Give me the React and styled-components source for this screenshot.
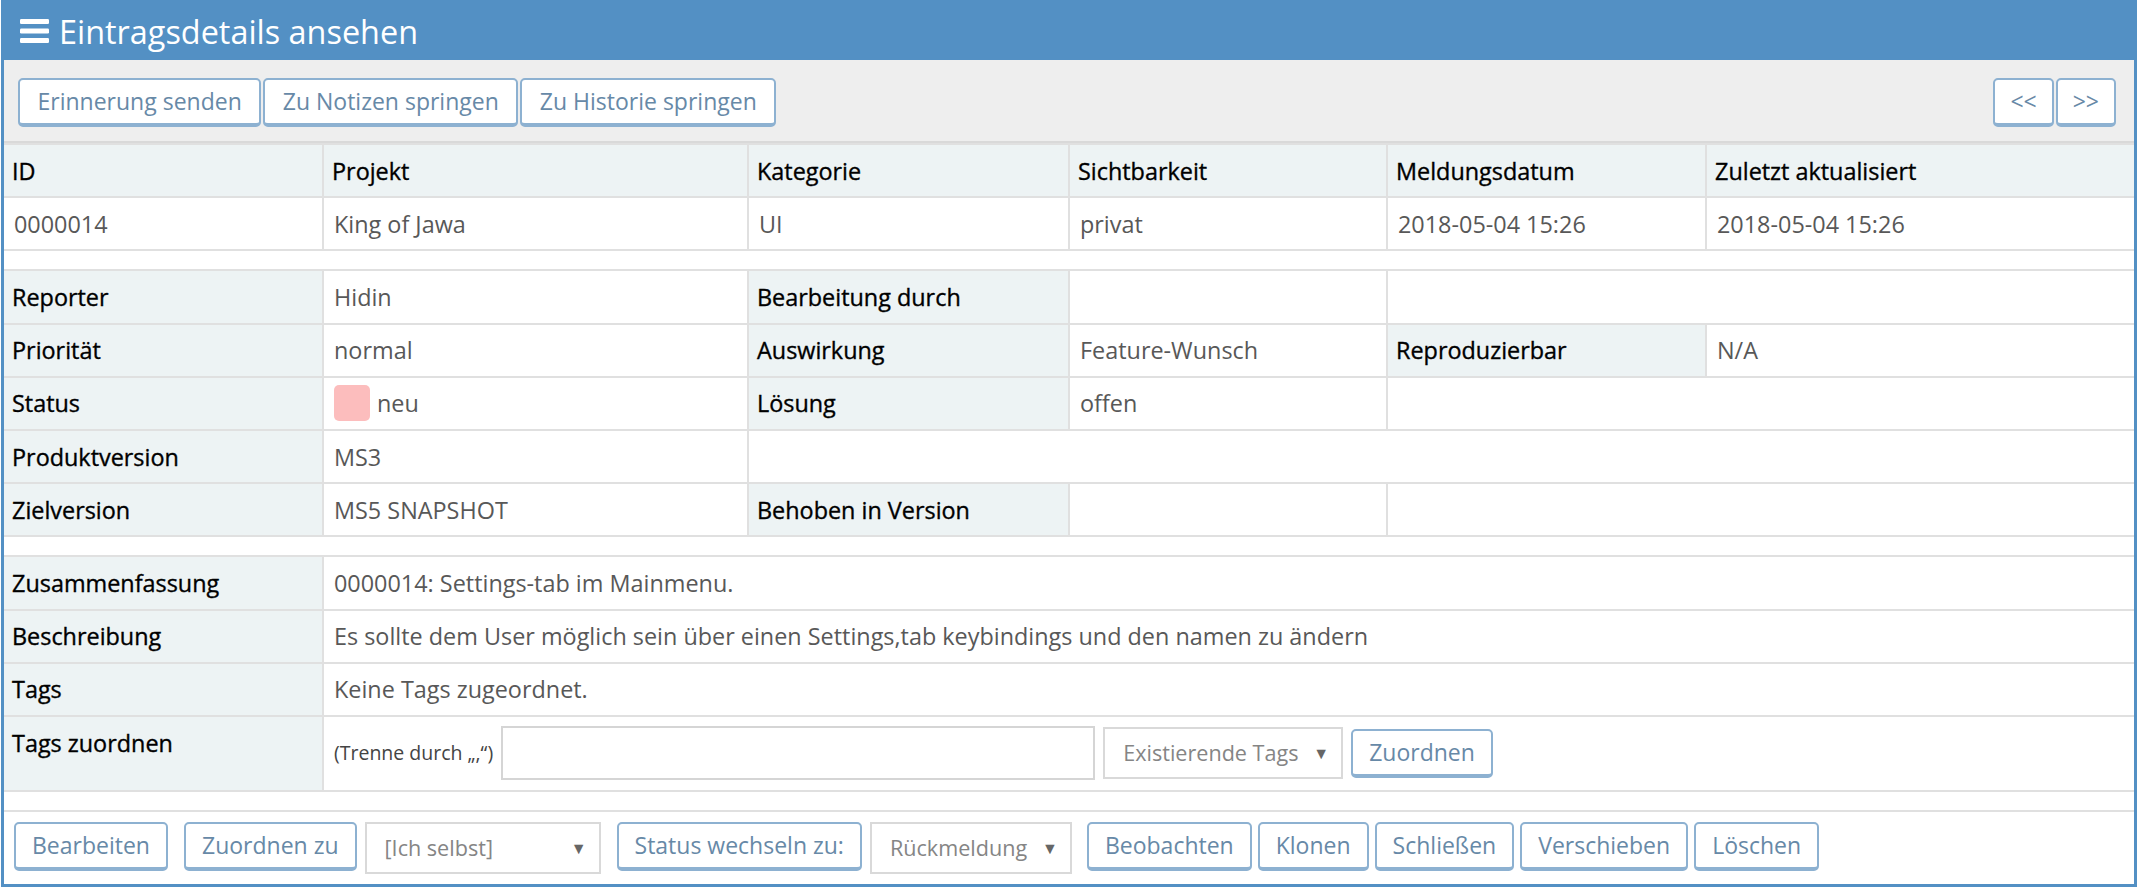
import React from "react";
import styled, { createGlobalStyle } from "styled-components";

const GlobalStyle = createGlobalStyle`
  html, body {
    margin: 0;
    padding: 0;
    background: #ffffff;
  }
  body {
    font-family: "Open Sans", "Liberation Sans", sans-serif;
    font-size: 23px;
    color: #555555;
  }
  * {
    box-sizing: border-box;
  }
`;

const COLS = "318px 423px 319px 316px 317px 1fr";
const ROW_H = "51.2px";

function App() {
  return (
    <>
      <GlobalStyle />
      <Widget>
        <Header>
          <Bars />
          <Title>Eintragsdetails ansehen</Title>
        </Header>

        <Toolbar>
          <ButtonRow>
            <Button $pad={17.5}>Erinnerung senden</Button>
            <Button $pad={17.5}>Zu Notizen springen</Button>
            <Button $pad={17.5}>Zu Historie springen</Button>
          </ButtonRow>
          <ButtonRow>
            <Button $narrow>&lt;&lt;</Button>
            <Button $narrow>&gt;&gt;</Button>
          </ButtonRow>
        </Toolbar>

        <Table $cols={COLS}>
          <Label>ID</Label>
          <Label>Projekt</Label>
          <Label>Kategorie</Label>
          <Label>Sichtbarkeit</Label>
          <Label>Meldungsdatum</Label>
          <Label>Zuletzt aktualisiert</Label>
          <Value>0000014</Value>
          <Value>King of Jawa</Value>
          <Value>UI</Value>
          <Value>privat</Value>
          <Value>2018-05-04 15:26</Value>
          <Value>2018-05-04 15:26</Value>
        </Table>

        <Spacer />

        <Table $cols={COLS}>
          <Label>Reporter</Label>
          <Value>Hidin</Value>
          <Label>Bearbeitung durch</Label>
          <Value />
          <Value $span={2} />

          <Label>Priorität</Label>
          <Value>normal</Value>
          <Label>Auswirkung</Label>
          <Value>Feature-Wunsch</Value>
          <Label>Reproduzierbar</Label>
          <Value>N/A</Value>

          <Label>Status</Label>
          <Value>
            <StatusSwatch $color="#fcbdbd" />
            neu
          </Value>
          <Label>Lösung</Label>
          <Value>offen</Value>
          <Value $span={2} />

          <Label>Produktversion</Label>
          <Value>MS3</Value>
          <Value $span={4} />

          <Label>Zielversion</Label>
          <Value>MS5 SNAPSHOT</Value>
          <Label>Behoben in Version</Label>
          <Value />
          <Value $span={2} />
        </Table>

        <Spacer />

        <Table $cols="318px 1fr">
          <Label>Zusammenfassung</Label>
          <Value>0000014: Settings-tab im Mainmenu.</Value>
          <Label>Beschreibung</Label>
          <Value>
            Es sollte dem User möglich sein über einen Settings,tab keybindings und den namen zu ändern
          </Value>
          <Label>Tags</Label>
          <Value>Keine Tags zugeordnet.</Value>
          <Label $top>Tags zuordnen</Label>
          <TagCell>
            <Hint>(Trenne durch „,“)</Hint>
            <TagInput type="text" />
            <FakeSelect $width={240}>
              <span>Existierende Tags</span>
              <Caret>▼</Caret>
            </FakeSelect>
            <Button>Zuordnen</Button>
          </TagCell>
        </Table>

        <Spacer />

        <ActionBar>
          <Button>Bearbeiten</Button>
          <Group $ml={16}>
            <Button>Zuordnen zu</Button>
            <FakeSelect $width={236}>
              <span>[Ich selbst]</span>
              <Caret>▼</Caret>
            </FakeSelect>
          </Group>
          <Group $ml={16}>
            <Button>Status wechseln zu:</Button>
            <FakeSelect $width={202}>
              <span>Rückmeldung</span>
              <Caret>▼</Caret>
            </FakeSelect>
          </Group>
          <Group $ml={15} $gap={6}>
            <Button>Beobachten</Button>
            <Button>Klonen</Button>
            <Button>Schließen</Button>
            <Button>Verschieben</Button>
            <Button>Löschen</Button>
          </Group>
        </ActionBar>
      </Widget>
    </>
  );
}

const Bars = () => (
  <svg width="29" height="24" viewBox="0 0 29 24" aria-hidden="true">
    <rect x="0" y="0" width="29" height="5" rx="1.2" fill="#ffffff" />
    <rect x="0" y="9.5" width="29" height="5" rx="1.2" fill="#ffffff" />
    <rect x="0" y="19" width="29" height="5" rx="1.2" fill="#ffffff" />
  </svg>
);

export default App;

const Widget = styled.div`
  width: 2136px;
  margin: 0 3px 0 1px;
  border: 3px solid #5390c4;
  background: #ffffff;
`;

const Header = styled.div`
  height: 57px;
  background: #5390c4;
  display: flex;
  align-items: center;
  gap: 10px;
  padding: 0 0 2px 16px;
`;

const Title = styled.h4`
  margin: 0;
  font-family: "Open Sans", "Liberation Sans", sans-serif;
  font-weight: 400;
  font-size: 32.4px;
  line-height: 40px;
  color: #ffffff;
`;

const Toolbar = styled.div`
  display: flex;
  justify-content: space-between;
  align-items: flex-start;
  height: 83px;
  padding: 18px 18px 0 14px;
  background: #eeeeee;
  border-bottom: 2px solid #d9d9d9;
`;

const ButtonRow = styled.div`
  display: flex;
  gap: 2px;
`;

const Button = styled.button`
  flex-shrink: 0;
  height: 49px;
  padding: 0 ${(p) => (p.$narrow ? 15 : p.$pad || 16)}px;
  min-width: ${(p) => (p.$narrow ? "60px" : "0")};
  background: #ffffff;
  border: 2px solid #8db1d1;
  border-bottom-width: 4px;
  border-radius: 5px;
  color: #6789a7;
  font-family: "Open Sans", "Liberation Sans", sans-serif;
  font-size: 23px;
  line-height: 1;
  white-space: nowrap;
  cursor: pointer;
`;

const Table = styled.div`
  display: grid;
  grid-template-columns: ${(p) => p.$cols};
  grid-auto-rows: minmax(${ROW_H}, auto);
  gap: 2px;
  background: #e0e0e0;
  border-top: 2px solid #e0e0e0;
  border-bottom: 2px solid #e0e0e0;
`;

const Cell = styled.div`
  display: flex;
  align-items: center;
  padding: 0 10px;
  font-size: 23.4px;
  line-height: 32px;
  white-space: nowrap;
  grid-column: ${(p) => (p.$span ? `span ${p.$span}` : "auto")};
`;

const Label = styled(Cell)`
  background: #edf3f4;
  color: #000000;
  font-weight: 400;
  -webkit-text-stroke: 0.35px #000000;
  padding-left: 8px;
  align-items: ${(p) => (p.$top ? "flex-start" : "center")};
  padding-top: ${(p) => (p.$top ? "10px" : "0")};
`;

const Value = styled(Cell)`
  background: #ffffff;
  color: #585858;
`;

const StatusSwatch = styled.span`
  display: inline-block;
  width: 36px;
  height: 36px;
  margin-right: 7px;
  border-radius: 5px;
  background: ${(p) => p.$color};
`;

const Spacer = styled.div`
  height: 18px;
  background: #ffffff;
`;

const TagCell = styled(Cell)`
  background: #ffffff;
  height: 73px;
  padding-top: 0;
  gap: 8px;
`;

const Hint = styled.span`
  font-size: 19.5px;
  color: #444444;
`;

const TagInput = styled.input`
  flex-shrink: 0;
  width: 594px;
  height: 54px;
  border: 2px solid #d5d5d5;
  background: #ffffff;
  padding: 0 10px;
  font-family: inherit;
  font-size: 22px;
  outline: none;
`;

const FakeSelect = styled.div`
  flex-shrink: 0;
  width: ${(p) => p.$width}px;
  height: 52px;
  display: flex;
  align-items: center;
  justify-content: space-between;
  padding: 0 12px 0 18px;
  border: 2px solid #d9d9d9;
  background: #ffffff;
  color: #858585;
  font-size: 21.6px;
  white-space: nowrap;
`;

const Caret = styled.span`
  font-size: 16px;
  color: #666666;
`;

const ActionBar = styled.div`
  display: flex;
  align-items: flex-start;
  height: 74px;
  padding: 10px 0 0 10px;
  border-top: 2px solid #e0e0e0;
`;

const Group = styled.div`
  display: flex;
  align-items: flex-start;
  gap: ${(p) => (p.$gap ? p.$gap : 8)}px;
  margin-left: ${(p) => p.$ml}px;
`;
